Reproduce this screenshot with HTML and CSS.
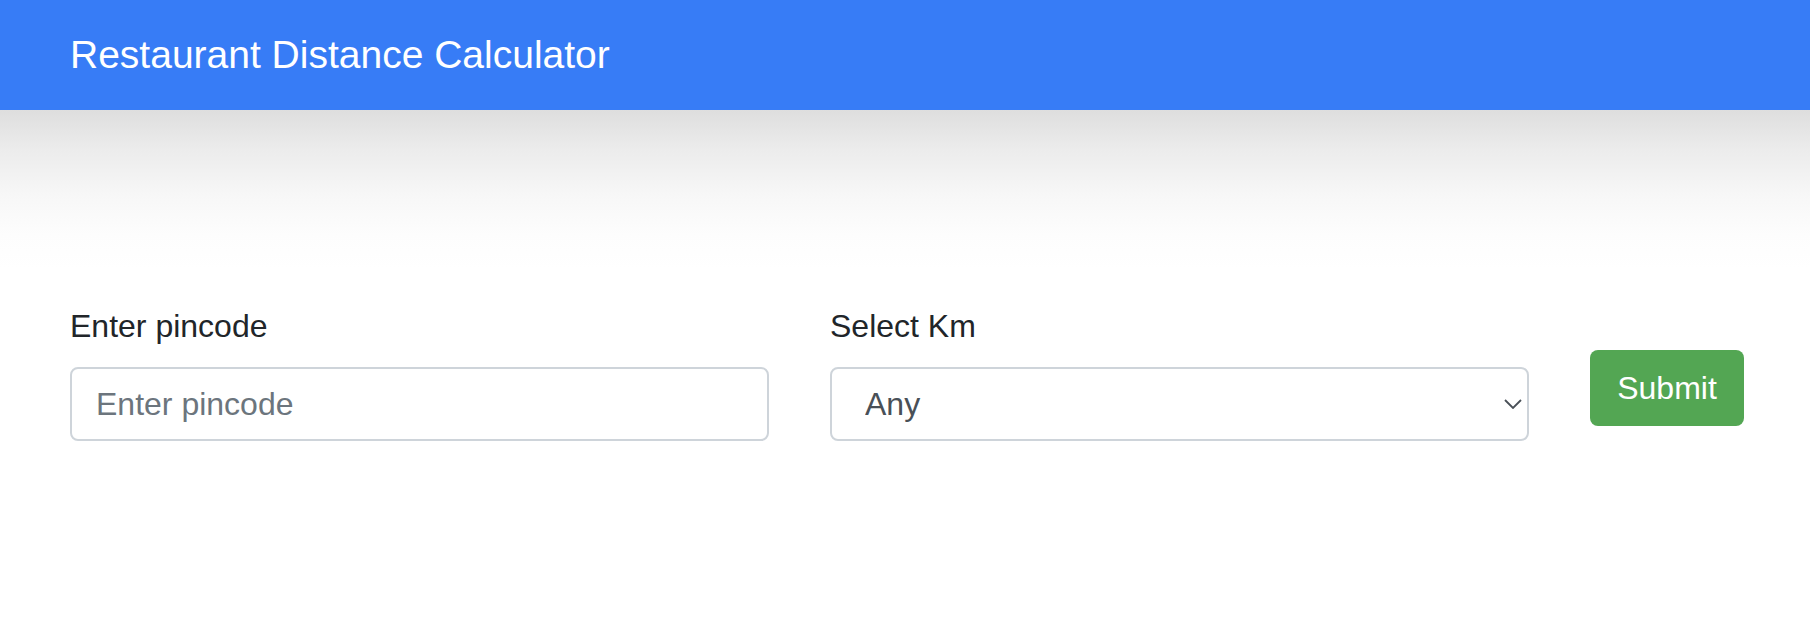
FILE: index.html
```html
<!DOCTYPE html>
<html lang="en">
<head>
<meta charset="utf-8">
<title>Restaurant Distance Calculator</title>
<link rel="stylesheet" href="styles.css">
</head>
<body>
<header class="topbar">
  <h1 class="brand">Restaurant Distance Calculator</h1>
</header>
<main class="content">
  <form class="search-form">
    <div class="field">
      <label class="field-label" for="pincode">Enter pincode</label>
      <input class="field-input" id="pincode" type="text" placeholder="Enter pincode">
    </div>
    <div class="field">
      <label class="field-label" for="km">Select Km</label>
      <div class="select-wrap">
        <select class="field-input field-select" id="km">
          <option>Any</option>
          <option>1 Km</option>
          <option>5 Km</option>
          <option>10 Km</option>
        </select>
        <svg class="chevron" width="18" height="10" viewBox="0 0 18 10"><path d="M1 1 L9 9 L17 1" fill="none" stroke="#495057" stroke-width="1.8"/></svg>
      </div>
    </div>
    <button class="submit-btn" type="button">Submit</button>
  </form>
</main>
</body>
</html>
```
FILE: styles.css
```css
* { box-sizing: border-box; }
html, body { margin: 0; padding: 0; }
body {
  font-family: "Liberation Sans", Arial, sans-serif;
  color: #212529;
  background: #fff;
  min-height: 634px;
}
.topbar {
  height: 110px;
  background: #377cf6;
  display: flex;
  align-items: center;
  padding: 0 70px;
}
.brand {
  margin: 0;
  font-size: 39px;
  font-weight: 400;
  color: #fff;
  line-height: normal;
}
.content {
  background: linear-gradient(#dedede 0, #ececec 40px, #f7f7f7 85px, #fdfdfd 125px, #ffffff 160px, #ffffff 100%);
  padding: 192px 66px 0 70px;
  min-height: 524px;
}
.search-form {
  display: grid;
  grid-template-columns: 699px 699px 154px;
  column-gap: 61px;
  align-items: end;
}
.field {
  display: flex;
  flex-direction: column;
}
.field-label {
  font-size: 32px;
  line-height: 48px;
  margin-bottom: 17px;
  color: #212529;
}
.field-input {
  height: 74px;
  width: 100%;
  border: 2px solid #ced4da;
  border-radius: 8px;
  font-family: "Liberation Sans", Arial, sans-serif;
  font-size: 32px;
  color: #495057;
  padding: 0 24px;
  background: #fff;
  outline: none;
}
.field-input::placeholder { color: #6c757d; }
.select-wrap { position: relative; }
.field-select {
  appearance: none;
  -webkit-appearance: none;
  padding-left: 33px;
}
.chevron {
  position: absolute;
  right: 7px;
  top: 32px;
  pointer-events: none;
}
.submit-btn {
  height: 76px;
  margin-bottom: 15px;
  background: #53a653;
  color: #fff;
  border: 0;
  border-radius: 8px;
  font-family: "Liberation Sans", Arial, sans-serif;
  font-size: 32px;
  padding: 0 26px;
}
```
